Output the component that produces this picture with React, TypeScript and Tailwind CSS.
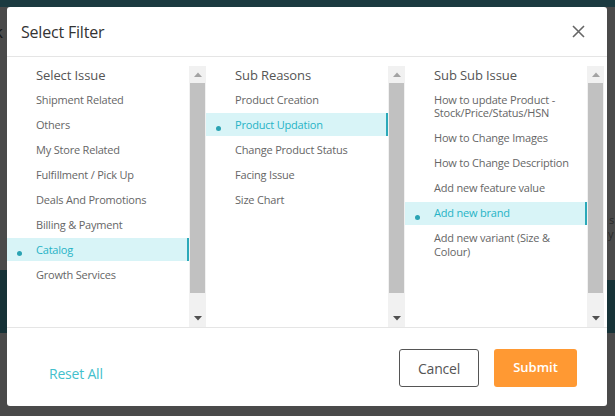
import React from "react";

const font = { fontFamily: '"Open Sans", "Noto Sans", sans-serif' };

type Row = { label: string; selected?: boolean };

const col1: Row[] = [
  { label: "Shipment Related" },
  { label: "Others" },
  { label: "My Store Related" },
  { label: "Fulfillment / Pick Up" },
  { label: "Deals And Promotions" },
  { label: "Billing & Payment" },
  { label: "Catalog", selected: true },
  { label: "Growth Services" },
];
const col2: Row[] = [
  { label: "Product Creation" },
  { label: "Product Updation", selected: true },
  { label: "Change Product Status" },
  { label: "Facing Issue" },
  { label: "Size Chart" },
];
const col3: Row[] = [
  { label: "How to update Product - Stock/Price/Status/HSN" },
  { label: "How to Change Images" },
  { label: "How to Change Description" },
  { label: "Add new feature value" },
  { label: "Add new brand", selected: true },
  { label: "Add new variant (Size & Colour)" },
];

function Scrollbar() {
  return (
    <div className="w-[17px] h-full flex flex-col bg-[#f1f1f1]">
      <div className="h-[17px] flex items-center justify-center">
        <svg width="8" height="5" viewBox="0 0 8 5">
          <path d="M0 5 L4 0.5 L8 5 Z" fill="#a3a3a3" />
        </svg>
      </div>
      <div className="h-[210px] mx-[1px] bg-[#c1c1c1]" />
      <div className="flex-1" />
      <div className="h-[17px] flex items-center justify-center">
        <svg width="8" height="5" viewBox="0 0 8 5">
          <path d="M0 0 L8 0 L4 4.5 Z" fill="#505050" />
        </svg>
      </div>
    </div>
  );
}

function Column({ title, rows }: { title: string; rows: Row[] }) {
  return (
    <div className="w-[199px] h-full pt-[9px] flex">
      <div className="flex-1 flex flex-col">
        <div className="h-[18px] mb-[4px] pl-[29px] text-[13px] leading-[18px] tracking-[-0.1px] text-[#555]">
          {title}
        </div>
        {rows.map((r) => (
          <div
            key={r.label}
            className={
              r.selected
                ? "relative mb-[2px] pl-[29px] pr-[12px] py-[4.75px] text-[11px] leading-[13.5px] tracking-[-0.2px] bg-[#d8f4f7] text-[#26b3c6] border-r-2 border-[#2ba9b9]"
                : "relative mb-[2px] pl-[29px] pr-[12px] py-[4.75px] text-[11px] leading-[13.5px] tracking-[-0.2px] text-[#666]"
            }
          >
            {r.selected && (
              <span className="absolute left-[10px] top-[13px] w-[5px] h-[5px] rounded-full bg-[#2aa3b3]" />
            )}
            {r.label}
          </div>
        ))}
      </div>
      <Scrollbar />
    </div>
  );
}

export default function App() {
  return (
    <div className="relative w-[615px] h-[416px] overflow-hidden bg-[#4a4a4a]" style={font}>
      <div className="h-[7px] bg-[#1b3a40]" />
      <div className="absolute left-0 top-[270px] w-[7px] h-[63px] bg-[#163237]" />
      <div className="absolute right-0 top-[280px] w-[8px] h-[53px] bg-[#163237]" />
      <span className="absolute left-[-6px] top-[20px] text-[17px] leading-[24px] text-[#151515]">k</span>
      <span className="absolute left-[609px] top-[214px] text-[11px] leading-[12px] text-[#2a2a2a]">s</span>
      <span className="absolute left-[608px] top-[228px] text-[11px] leading-[12px] text-[#2a2a2a]">y</span>

      <div className="absolute left-[7px] top-[7px] w-[600px] h-[399px] bg-white rounded-[3px] flex flex-col">
        <div className="h-[50px] shrink-0 flex items-center justify-between pl-[14px] pr-[22px] border-b border-[#e5e5e5]">
          <div className="text-[16px] tracking-[-0.2px] text-[#333]">Select Filter</div>
          <svg width="13" height="13" viewBox="0 0 13 13">
            <path d="M1 1 L12 12 M12 1 L1 12" stroke="#666" strokeWidth="1.6" />
          </svg>
        </div>
        <div className="h-[271px] shrink-0 flex border-b border-[#e5e5e5]">
          <Column title="Select Issue" rows={col1} />
          <Column title="Sub Reasons" rows={col2} />
          <Column title="Sub Sub Issue" rows={col3} />
        </div>
        <div className="flex-1 flex items-start pt-[21px] pl-[42px] pr-[30px]">
          <div className="mt-[15px] text-[14px] leading-[20px] tracking-[-0.2px] text-[#43bfcc]">Reset All</div>
          <div className="flex-1" />
          <button className="w-[80px] h-[38px] rounded-[3px] border border-[#555] text-[14px] tracking-[-0.2px] text-[#555] bg-white">
            Cancel
          </button>
          <button className="ml-[15px] w-[83px] h-[38px] rounded-[3px] bg-[#ff9933] text-[13px] font-semibold text-white">
            Submit
          </button>
        </div>
      </div>
    </div>
  );
}
